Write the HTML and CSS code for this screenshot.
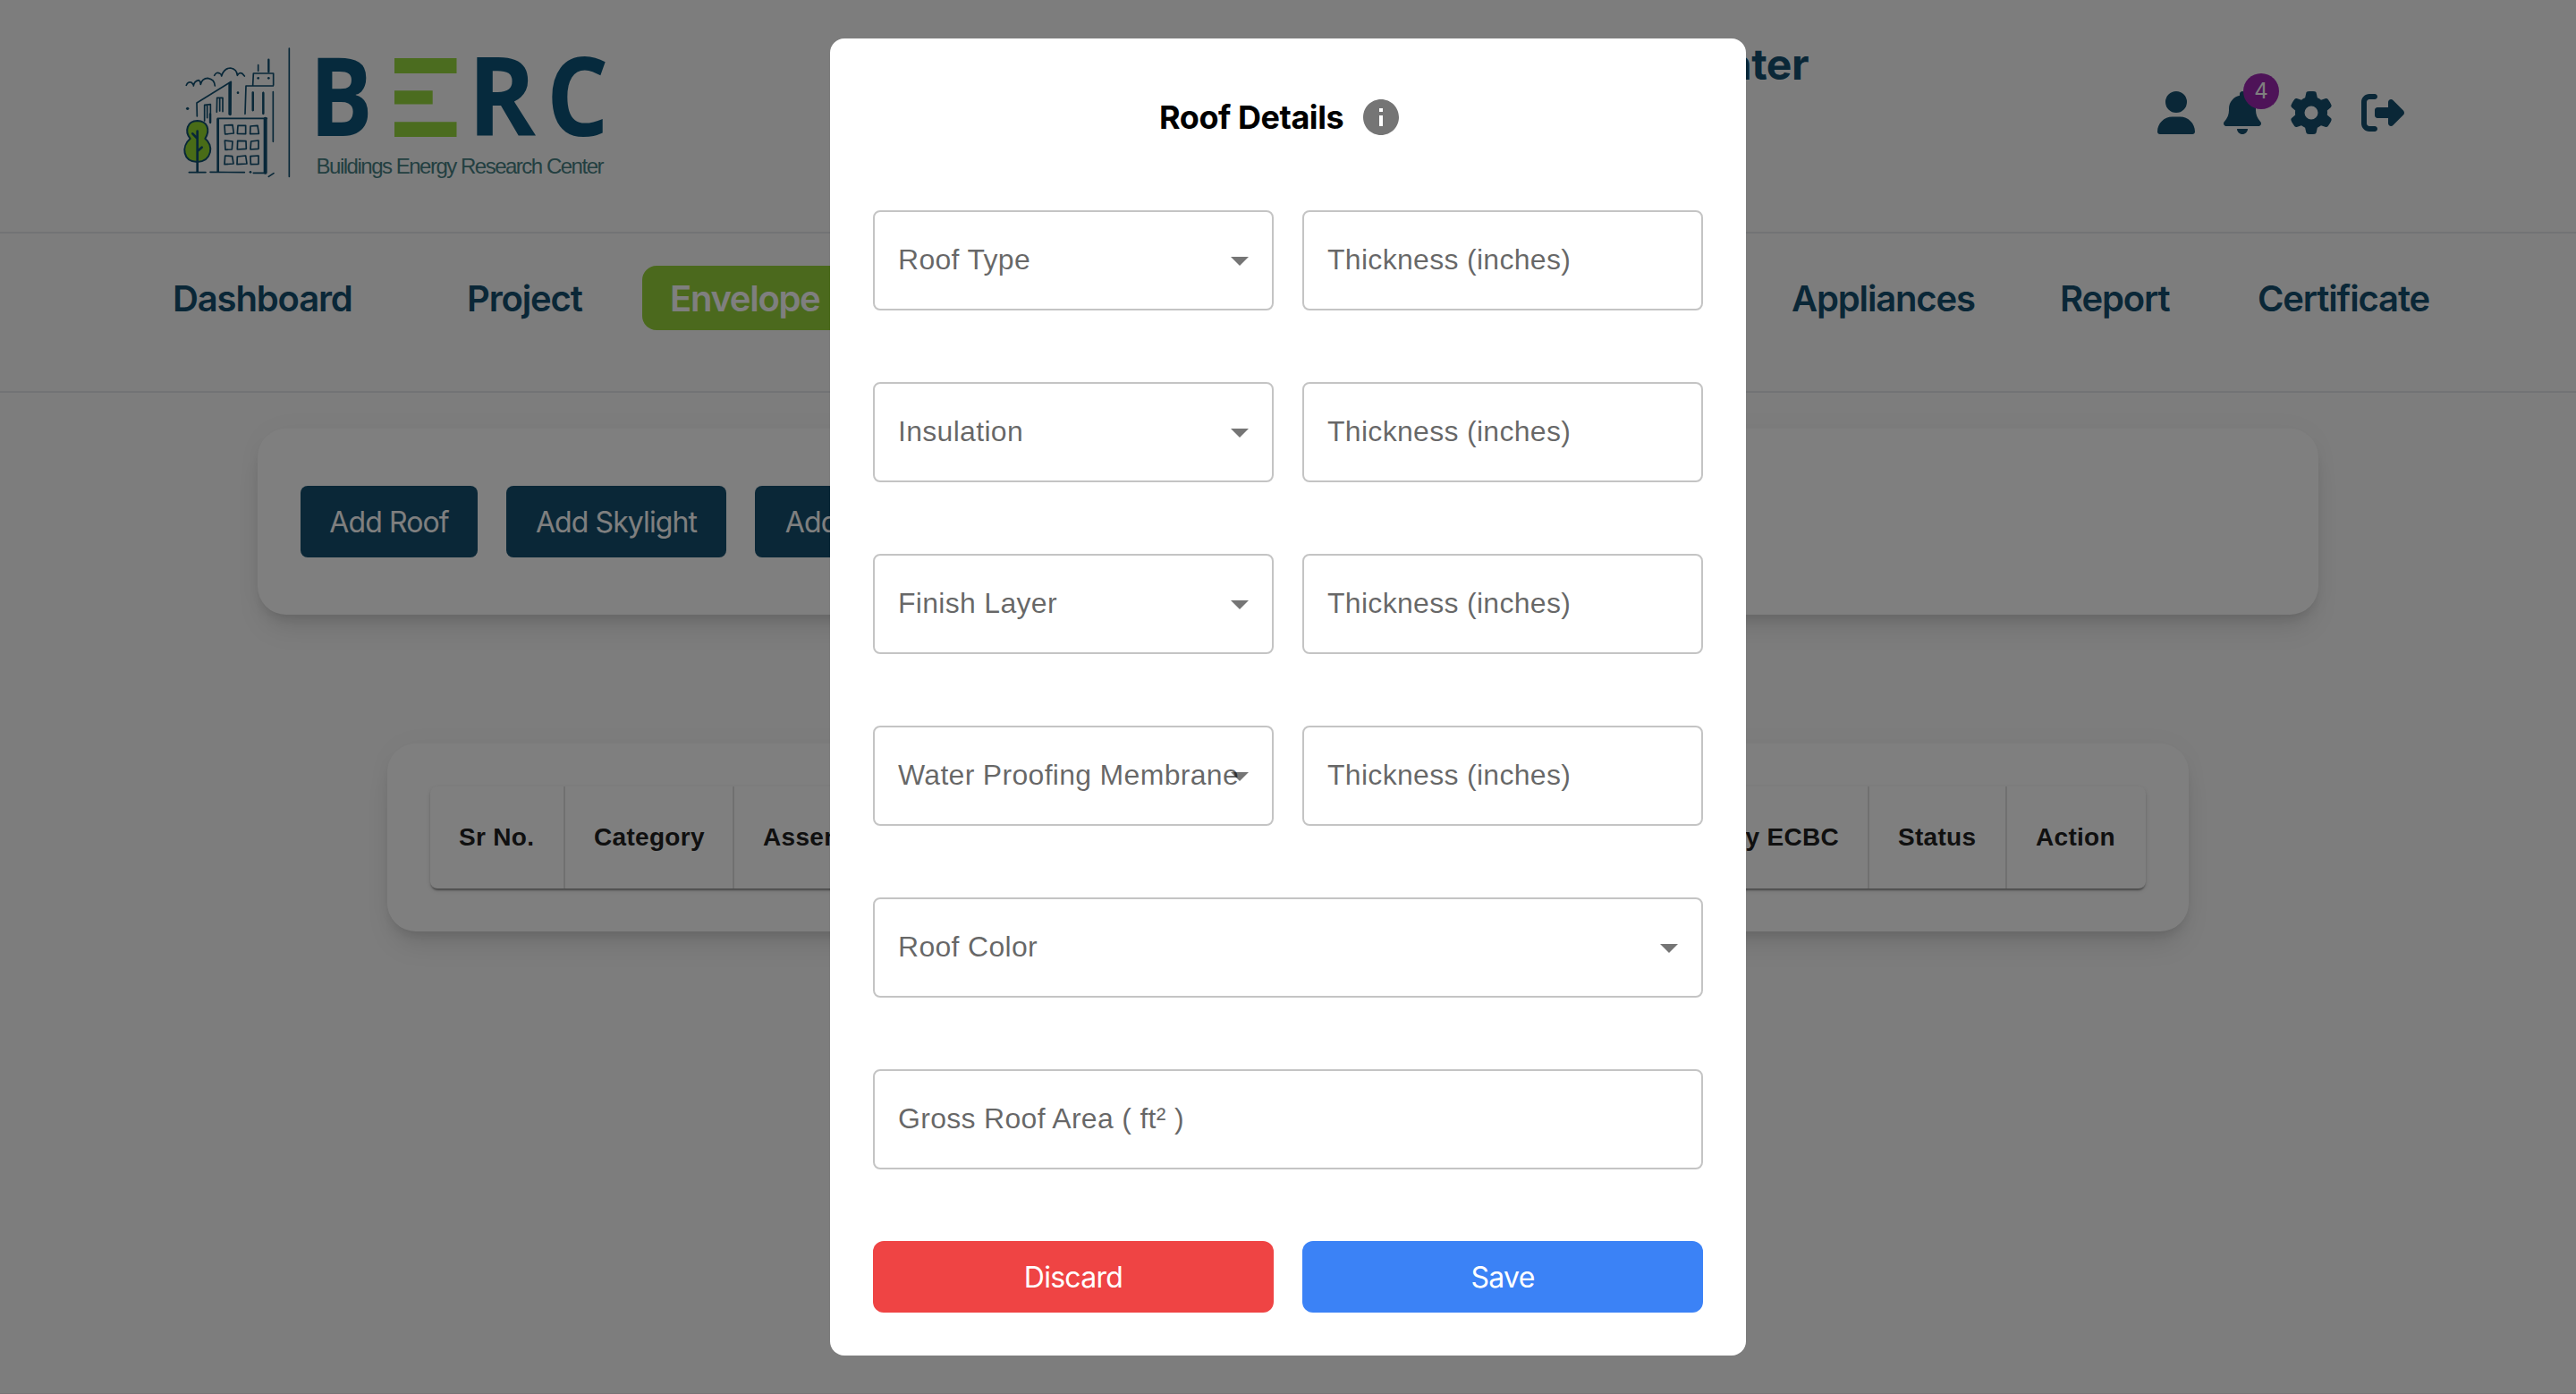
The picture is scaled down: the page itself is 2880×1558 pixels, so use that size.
FILE: index.html
```html
<!DOCTYPE html>
<html lang="en">
<head>
<meta charset="utf-8">
<title>BERC</title>
<link rel="stylesheet" href="styles.css">
</head>
<body>
<div class="page">
  <header class="header">
    <svg class="logo" viewBox="0 0 500 170" aria-label="BERC">
      <g class="ink" transform="scale(.33333)">
        <path d="M400 42V472" stroke-width="5"/>
        <path d="M55 166Q60 152 73 157Q80 165 79 168Q81 152 97 149Q102 151 103 163Q108 142 127 142Q150 146 151 168M149 133Q156 120 167 126Q173 128 173 135Q181 109 203 108Q225 112 226 133Q233 121 243 127L250 135"/>
        <path d="M91 270L90 225L205 154L203 265M116 285V232L136 230V292M125 234V275M157 256L158 208H177V254M167 212V252"/>
        <path d="M201 160V262" stroke-width="10"/>
        <path d="M252 262L255 168H346M279 250V190M313 262V190M346 188V355M278 166L280 126H347V166M296 118V98"/>
        <path d="M331 120V80M135 290V262M278 250V190M313 260V192" stroke-width="7"/>
        <path d="M162 455L160 277H325"/>
        <path d="M161 455V280" stroke-width="8"/>
        <path d="M320 278V458" stroke-width="12"/>
        <path d="M183 300L210 299L214 327L185 330ZM228 301H254V329L226 328ZM270 303L294 301L298 328L269 329ZM184 351L210 354L208 381L186 382ZM227 352L255 353L256 379L226 381ZM272 354L297 351V379L270 381ZM185 402L209 404L213 429L183 431ZM226 405L254 402L258 429L225 431ZM270 404L297 402V430L271 431Z"/>
        <path d="M135 457L250 458M280 460H322M331 472L348 461M64 458H120"/>
        <path class="tree" d="M92 285C58 285 48 320 68 345C38 370 42 422 92 423C142 420 147 365 118 345C136 315 126 286 92 285Z"/>
        <path d="M92 456V320M76 328L91 344M107 374L92 387" stroke-width="8"/>
        <circle class="dot" cx="59" cy="244" r="5"/><circle class="dot" cx="228" cy="191" r="4"/><circle class="dot" cx="296" cy="142" r="4"/><circle class="dot" cx="331" cy="142" r="4"/><circle class="dot" cx="270" cy="457" r="4"/>
      </g>
      <g class="word">
        <text transform="translate(156 111.500) scale(.86 1)">B</text>
        <text transform="translate(333 111.500) scale(.94 1)">R</text>
        <text transform="translate(421 111.500) scale(.89 1)">C</text>
      </g>
      <path class="bars" d="M251 25h69.500v17h-69.500zM251 61.300h42.700v15.200h-42.700zM251 96.200h69.500v16.800h-69.500z"/>
      <text class="tagline" x="163.500" y="153.500" textLength="322">Buildings Energy Research Center</text>
    </svg>
    <h1 class="site-title">Center</h1>
    <div class="tools">
      <svg class="tool tool-user" viewBox="0 0 448 512"><path d="M224 256A128 128 0 1 0 224 0a128 128 0 1 0 0 256zm-45.700 48C79.800 304 0 383.800 0 482.300C0 498.700 13.300 512 29.700 512H418.300c16.400 0 29.700-13.300 29.700-29.700C448 383.800 368.200 304 269.700 304H178.300z"/></svg>
      <div class="bell">
        <svg class="tool tool-bell" viewBox="0 0 448 512"><path d="M224 0c-17.700 0-32 14.300-32 32V51.200C119 66 64 130.600 64 208v18.800c0 47-17.300 92.400-48.500 127.600l-7.400 8.300c-8.400 9.400-10.400 22.900-5.300 34.400S19.400 416 32 416H416c12.600 0 24-7.400 29.200-18.900s3.100-25-5.300-34.400l-7.400-8.300C401.300 319.200 384 273.900 384 226.800V208c0-77.400-55-142-128-156.800V32c0-17.700-14.300-32-32-32zm45.300 493.300c12-12 18.700-28.300 18.700-45.300H224 160c0 17 6.700 33.300 18.700 45.300s28.300 18.700 45.300 18.700s33.300-6.700 45.300-18.700z"/></svg>
        <span class="badge">4</span>
      </div>
      <svg class="tool tool-gear" viewBox="0 0 512 512"><path d="M495.900 166.600c3.200 8.700 .5 18.400-6.400 24.600l-43.300 39.400c1.100 8.300 1.700 16.800 1.700 25.400s-.6 17.100-1.700 25.400l43.300 39.400c6.900 6.200 9.600 15.900 6.400 24.600c-4.400 11.900-9.700 23.300-15.800 34.300l-4.700 8.100c-6.600 11-14 21.400-22.100 31.200c-5.900 7.200-15.700 9.600-24.500 6.800l-55.700-17.700c-13.400 10.300-28.200 18.900-44 25.400l-12.500 57.100c-2 9.100-9 16.300-18.200 17.800c-13.800 2.300-28 3.500-42.500 3.500s-28.700-1.200-42.500-3.500c-9.200-1.500-16.200-8.700-18.200-17.800l-12.500-57.100c-15.800-6.500-30.600-15.100-44-25.400L83.100 425.900c-8.800 2.800-18.600 .3-24.500-6.800c-8.100-9.800-15.500-20.200-22.100-31.200l-4.700-8.100c-6.100-11-11.400-22.400-15.800-34.300c-3.200-8.700-.5-18.400 6.400-24.600l43.300-39.400C64.600 273.100 64 264.600 64 256s.6-17.100 1.700-25.400L22.400 191.200c-6.900-6.200-9.600-15.900-6.400-24.600c4.400-11.900 9.700-23.300 15.800-34.300l4.700-8.100c6.600-11 14-21.400 22.100-31.200c5.900-7.200 15.700-9.600 24.500-6.800l55.700 17.700c13.400-10.300 28.200-18.900 44-25.400l12.500-57.100c2-9.100 9-16.300 18.200-17.800C227.300 1.200 241.500 0 256 0s28.700 1.200 42.500 3.500c9.200 1.500 16.200 8.700 18.200 17.800l12.500 57.100c15.800 6.500 30.600 15.100 44 25.400l55.700-17.700c8.800-2.800 18.600-.3 24.500 6.800c8.100 9.800 15.500 20.200 22.100 31.200l4.700 8.100c6.100 11 11.400 22.400 15.800 34.300zM256 336a80 80 0 1 0 0-160 80 80 0 1 0 0 160z"/></svg>
      <svg class="tool tool-exit" viewBox="0 0 512 512"><path d="M377.900 105.900L500.700 228.700c7.200 7.200 11.300 17.100 11.300 27.300s-4.100 20.100-11.300 27.300L377.900 406.100c-6.400 6.400-15 9.900-24 9.900c-18.700 0-33.900-15.200-33.900-33.900l0-62.100-128 0c-17.700 0-32-14.300-32-32l0-64c0-17.700 14.300-32 32-32l128 0 0-62.100c0-18.700 15.200-33.900 33.900-33.900c9 0 17.600 3.600 24 9.900zM160 96L96 96c-17.700 0-32 14.300-32 32l0 256c0 17.700 14.300 32 32 32l64 0c17.700 0 32 14.300 32 32s-14.300 32-32 32l-64 0c-53 0-96-43-96-96L0 128C0 75 43 32 96 32l64 0c17.700 0 32 14.300 32 32s-14.300 32-32 32z"/></svg>
    </div>
  </header>

  <nav class="nav">
    <a class="nav-item nav-dashboard">Dashboard</a>
    <a class="nav-item nav-project">Project</a>
    <a class="nav-item nav-envelope active">Envelope</a>
    <a class="nav-item nav-appliances">Appliances</a>
    <a class="nav-item nav-report">Report</a>
    <a class="nav-item nav-certificate">Certificate</a>
  </nav>

  <section class="card actions">
    <button class="add add-roof">Add Roof</button>
    <button class="add add-skylight">Add Skylight</button>
    <button class="add add-wall">Add Wall</button>
  </section>

  <section class="card listing">
    <div class="table">
      <div class="th">Sr No.</div>
      <div class="th">Category</div>
      <div class="th">Assembly</div>
      <div class="th th-end">By ECBC</div>
      <div class="th">Status</div>
      <div class="th">Action</div>
    </div>
  </section>
</div>

<div class="overlay">
  <form class="modal">
    <div class="modal-head">
      <h2 class="modal-title">Roof Details</h2>
      <svg class="info" viewBox="0 0 24 24"><path d="M12 2C6.480 2 2 6.480 2 12s4.480 10 10 10 10-4.480 10-10S17.520 2 12 2zm1 15h-2v-6h2v6zm0-8h-2V7h2v2z"/></svg>
    </div>
    <div class="fields">
      <div class="field"><span>Roof Type</span><svg class="arrow" viewBox="0 0 24 24"><path d="M7 10l5 5 5-5z"/></svg></div>
      <div class="field"><span>Thickness (inches)</span></div>
      <div class="field"><span>Insulation</span><svg class="arrow" viewBox="0 0 24 24"><path d="M7 10l5 5 5-5z"/></svg></div>
      <div class="field"><span>Thickness (inches)</span></div>
      <div class="field"><span>Finish Layer</span><svg class="arrow" viewBox="0 0 24 24"><path d="M7 10l5 5 5-5z"/></svg></div>
      <div class="field"><span>Thickness (inches)</span></div>
      <div class="field"><span>Water Proofing Membrane</span><svg class="arrow" viewBox="0 0 24 24"><path d="M7 10l5 5 5-5z"/></svg></div>
      <div class="field"><span>Thickness (inches)</span></div>
      <div class="field wide"><span>Roof Color</span><svg class="arrow" viewBox="0 0 24 24"><path d="M7 10l5 5 5-5z"/></svg></div>
      <div class="field wide"><span>Gross Roof Area ( ft² )</span></div>
      <button class="btn discard" type="button">Discard</button>
      <button class="btn save" type="button">Save</button>
    </div>
  </form>
</div>
</body>
</html>
```
FILE: styles.css
```css
* { box-sizing: border-box; }
body {
  margin: 0;
  height: 1558px;
  overflow: hidden;
  background: #fafafa;
  font-family: Inter, "Liberation Sans", sans-serif;
}
h1, h2 { margin: 0; }
button { border: 0; font-family: inherit; white-space: nowrap; }
.page { height: 1558px; border-bottom: 1px solid #eee6ea; }

/* Header */
.header {
  display: flex;
  align-items: flex-start;
  height: 261px;
  padding: 40px 190px 0 190px;
  border-bottom: 2px solid #e5e7eb;
}
.logo { width: 500px; height: 170px; overflow: visible; }
.ink { fill: none; stroke: #114f70; stroke-width: 5; stroke-linecap: round; stroke-linejoin: round; }
.dot { fill: #114f70; stroke: none; }
.tree { fill: #93d82f; stroke-width: 6; }
.word { font-family: "Open Sans", sans-serif; font-weight: 700; font-size: 122.500px; fill: #0d557a; }
.bars { fill: #97d93e; }
.tagline { font-family: "Liberation Sans", sans-serif; font-size: 24px; fill: #467f82; }
.site-title {
  width: 1332px;
  padding-top: 2px;
  text-align: right;
  font-size: 48px;
  line-height: 60px;
  font-weight: 700;
  letter-spacing: -0.5px;
  color: #144f6e;
}
.tools { display: flex; padding-top: 62px; margin-left: 390px; color: #144f6e; }
.tool { display: block; height: 48px; fill: currentColor; }
.tool-user, .tool-bell { width: 42px; }
.tool-gear, .tool-exit { width: 48px; }
.bell { position: relative; margin: 0 32px; }
.tool-exit { margin-left: 32px; }
.badge {
  position: absolute;
  left: 22px;
  top: -20px;
  width: 40px;
  height: 40px;
  border-radius: 20px;
  background: #9c27b0;
  color: #fff;
  font-size: 24px;
  line-height: 40px;
  text-align: center;
}

/* Navigation */
.nav {
  display: flex;
  align-items: flex-start;
  height: 178px;
  padding: 36px 130px 0 162px;
  border-bottom: 2px solid #e5e7eb;
}
.nav-item {
  height: 72px;
  padding: 0 31px;
  border-radius: 16px;
  font-size: 40px;
  line-height: 74px;
  font-weight: 600;
  letter-spacing: -1.15px;
  color: #144f6e;
  white-space: nowrap;
}
.nav-dashboard { width: 264px; }
.nav-project { width: 194px; margin-left: 65px; }
.nav-envelope { width: 230px; margin-left: 33px; letter-spacing: -1.3px; }
.nav-appliances { width: 268px; margin-left: auto; }
.nav-report { width: 190px; margin-left: 32px; }
.nav-certificate { width: 257px; margin-left: 31px; }
.nav-item.active { background: #96d33b; color: #fff; }

/* Cards */
.card {
  border-radius: 32px;
  background: #fff;
  box-shadow: 0 20px 30px -6px rgba(0, 0, 0, .1), 0 8px 12px -4px rgba(0, 0, 0, .1), 0 0 30px rgba(0, 0, 0, .03);
}
.actions {
  display: flex;
  gap: 32px;
  width: 2304px;
  margin: 40px auto 0;
  padding: 64px 48px;
}
.add {
  height: 80px;
  padding: 0;
  border-radius: 8px;
  background: #144f6e;
  color: #fff;
  font-size: 32px;
  letter-spacing: -0.9px;
}
.add-roof { width: 198px; }
.add-skylight { width: 246px; }
.add-wall { width: 194px; }
.listing { width: 2014px; margin: 144px auto 0; padding: 48px; }
.table {
  display: grid;
  grid-template-columns: 151px 189px 634px 635px 154px 155px;
  height: 114px;
  border-radius: 8px;
  overflow: hidden;
  box-shadow: 0 4px 2px -2px rgba(0, 0, 0, .24), 0 2px 2px rgba(0, 0, 0, .16), 0 2px 6px rgba(0, 0, 0, .12);
}
.th {
  padding: 0 32px;
  border-right: 2px solid #e0e0e0;
  border-bottom: 2px solid #e0e0e0;
  font: 700 28px/114px "Liberation Sans", sans-serif;
  letter-spacing: .3px;
  color: #212121;
  white-space: nowrap;
}
.th:last-child { border-right: 0; }
.th-end { text-align: right; }

/* Dialog */
.overlay {
  position: fixed;
  inset: 0;
  display: flex;
  align-items: center;
  justify-content: center;
  background: rgba(0, 0, 0, .5);
}
.modal {
  width: 1024px;
  height: 1472px;
  padding: 48px;
  border-radius: 16px;
  background: #fff;
}
.modal-head {
  display: flex;
  align-items: center;
  gap: 16px;
  height: 80px;
  padding-left: 320px;
}
.modal-title {
  width: 208px;
  font-size: 36px;
  font-weight: 700;
  letter-spacing: -0.450px;
  color: #000;
  white-space: nowrap;
}
.info { width: 48px; height: 48px; fill: #757575; }
.fields {
  display: grid;
  grid-template-columns: 448px 448px;
  column-gap: 32px;
  row-gap: 80px;
  margin-top: 64px;
}
.field {
  position: relative;
  display: flex;
  align-items: center;
  height: 112px;
  padding: 0 26px 2px;
  border: 2px solid rgba(0, 0, 0, .23);
  border-radius: 8px;
  font: 400 32px/46px "Liberation Sans", sans-serif;
  letter-spacing: .3px;
  color: rgba(0, 0, 0, .6);
  white-space: nowrap;
}
.wide { grid-column: span 2; }
.arrow {
  position: absolute;
  right: 12px;
  top: 30px;
  width: 48px;
  height: 48px;
  fill: rgba(0, 0, 0, .54);
}
.btn { height: 80px; border-radius: 12px; color: #fff; font-size: 32px; letter-spacing: -0.7px; }
.discard { background: #ef4444; }
.save { background: #3b82f6; }
```
